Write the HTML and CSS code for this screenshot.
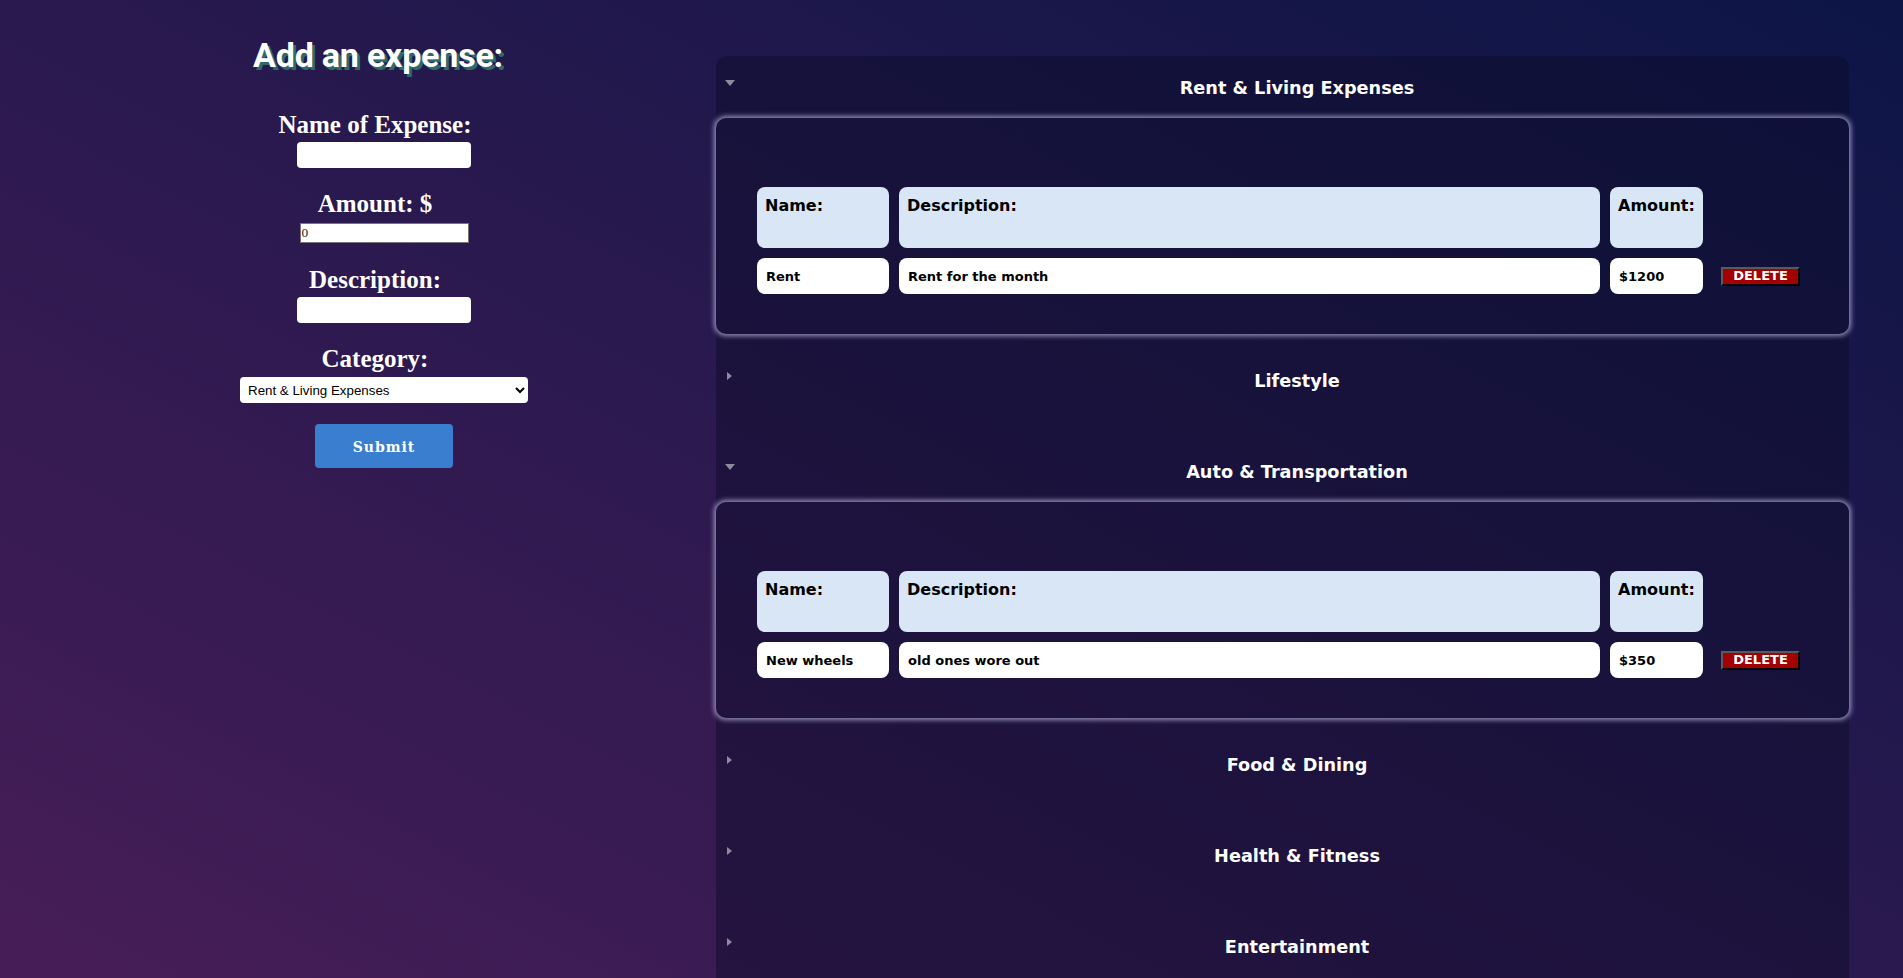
FILE: index.html
```html
<!DOCTYPE html>
<html lang="en">
<head>
<meta charset="utf-8">
<title>Expense Tracker</title>
<link rel="stylesheet" href="styles.css">
</head>
<body>
<div class="page">
  <aside class="form-col">
    <h1 class="title">Add an expense:</h1>
    <form class="expense-form">
      <div class="field">
        <label class="field-label" for="exp-name">Name of Expense:</label>
        <input class="text-input" id="exp-name" type="text">
      </div>
      <div class="field">
        <label class="field-label" for="exp-amount">Amount: $</label>
        <input class="num-input" id="exp-amount" type="text" value="0">
      </div>
      <div class="field">
        <label class="field-label" for="exp-desc">Description:</label>
        <input class="text-input" id="exp-desc" type="text">
      </div>
      <div class="field field-last">
        <label class="field-label" for="exp-cat">Category:</label>
        <select class="cat-select" id="exp-cat">
          <option>Rent &amp; Living Expenses</option>
          <option>Lifestyle</option>
          <option>Auto &amp; Transportation</option>
          <option>Food &amp; Dining</option>
          <option>Health &amp; Fitness</option>
          <option>Entertainment</option>
        </select>
      </div>
      <button class="submit-btn" type="button">Submit</button>
    </form>
  </aside>

  <main class="categories">
    <details class="category" open>
      <summary class="cat-head"><span class="marker-box"><span class="marker"></span></span><span class="cat-title">Rent &amp; Living Expenses</span></summary>
      <div class="cat-box">
        <div class="exp-grid">
          <div class="hcell">Name:</div>
          <div class="hcell">Description:</div>
          <div class="hcell">Amount:</div>
          <div class="acell"></div>
          <div class="dcell">Rent</div>
          <div class="dcell">Rent for the month</div>
          <div class="dcell">$1200</div>
          <div class="acell"><button class="del-btn" type="button">DELETE</button></div>
        </div>
      </div>
    </details>

    <details class="category">
      <summary class="cat-head"><span class="marker-box"><span class="marker"></span></span><span class="cat-title">Lifestyle</span></summary>
    </details>

    <details class="category" open>
      <summary class="cat-head"><span class="marker-box"><span class="marker"></span></span><span class="cat-title">Auto &amp; Transportation</span></summary>
      <div class="cat-box">
        <div class="exp-grid">
          <div class="hcell">Name:</div>
          <div class="hcell">Description:</div>
          <div class="hcell">Amount:</div>
          <div class="acell"></div>
          <div class="dcell">New wheels</div>
          <div class="dcell">old ones wore out</div>
          <div class="dcell">$350</div>
          <div class="acell"><button class="del-btn" type="button">DELETE</button></div>
        </div>
      </div>
    </details>

    <details class="category">
      <summary class="cat-head"><span class="marker-box"><span class="marker"></span></span><span class="cat-title">Food &amp; Dining</span></summary>
    </details>

    <details class="category">
      <summary class="cat-head"><span class="marker-box"><span class="marker"></span></span><span class="cat-title">Health &amp; Fitness</span></summary>
    </details>

    <details class="category">
      <summary class="cat-head"><span class="marker-box"><span class="marker"></span></span><span class="cat-title">Entertainment</span></summary>
    </details>
  </main>
</div>
</body>
</html>
```

FILE: styles.css
```css
html, body {
  margin: 0;
  padding: 0;
}

body {
  min-height: 100vh;
  background: linear-gradient(to top right, #471d57, #0c1546) fixed;
  overflow: hidden;
}

.page {
  display: flex;
  align-items: flex-start;
  width: 1903px;
  height: 978px;
  overflow: hidden;
}

/* ---------- left form column ---------- */
.form-col {
  width: 716px;
  flex: none;
  box-sizing: border-box;
  padding: 35px 0 0 52px;
  display: flex;
  flex-direction: column;
  align-items: center;
}

.title {
  margin: 0 0 36px 0;
  padding-right: 12px;
  font-family: Roboto, "Liberation Sans", sans-serif;
  font-weight: 700;
  font-size: 34px;
  line-height: 40px;
  letter-spacing: -0.2px;
  color: #ffffff;
  text-shadow: 3px 3px 0 #2d6b6b;
}

.expense-form {
  display: flex;
  flex-direction: column;
  align-items: center;
}

.field {
  display: flex;
  flex-direction: column;
  align-items: center;
  margin-bottom: 22px;
}

.field-last {
  margin-bottom: 20px;
}

.field-label {
  padding-right: 18px;
  margin-bottom: 3px;
  font-family: "Liberation Serif", serif;
  font-weight: 700;
  font-size: 25px;
  line-height: 28px;
  color: #ffffff;
}

.text-input {
  box-sizing: border-box;
  width: 174px;
  height: 26px;
  border: none;
  border-radius: 4px;
  background: #ffffff;
  padding: 0 6px;
  outline: none;
}

.num-input {
  box-sizing: border-box;
  width: 169px;
  height: 20px;
  margin-top: 2px;
  margin-bottom: 1px;
  border: 1px solid #767676;
  border-radius: 0;
  background: #ffffff;
  padding: 1px 1px;
  font-family: "Liberation Serif", serif;
  font-size: 13.33px;
  color: #222;
  outline: none;
}

.cat-select {
  box-sizing: border-box;
  width: 288px;
  height: 26px;
  margin-top: 1px;
  border: none;
  border-radius: 4px;
  background: #ffffff;
  padding: 0 4px;
  font-family: "Liberation Sans", Arial, sans-serif;
  font-size: 13.33px;
  color: #000;
}

.submit-btn {
  width: 138px;
  height: 44px;
  margin-top: 1px;
  border: none;
  border-radius: 4px;
  background: #3a7ecf;
  color: #ffffff;
  font-family: "DejaVu Serif", serif;
  font-weight: 700;
  font-size: 14px;
  letter-spacing: 1px;
  padding-top: 3px;
  cursor: pointer;
}

/* ---------- right categories panel ---------- */
.categories {
  width: 1133px;
  flex: none;
  margin-top: 56px;
  padding-top: 1px;
  min-height: 1100px;
  border-radius: 12px 12px 0 0;
  background: rgba(10, 10, 40, 0.45);
  font-family: "DejaVu Sans", Verdana, sans-serif;
}

.category {
  margin-bottom: 30px;
}

.category[open] {
  margin-bottom: 16px;
}

.cat-head {
  list-style: none;
  display: flex;
  align-items: center;
  height: 61px;
  padding-left: 8px;
  cursor: pointer;
}

.cat-head::-webkit-details-marker {
  display: none;
}

.marker-box {
  width: 11px;
  height: 10px;
  margin-bottom: 10px;
  display: flex;
  align-items: center;
  justify-content: center;
  flex: none;
}

.marker {
  width: 0;
  height: 0;
  border-left: 5px solid #8d8b9e;
  border-top: 4.5px solid transparent;
  border-bottom: 4.5px solid transparent;
}

.category[open] .marker {
  border-left: 5px solid transparent;
  border-right: 5px solid transparent;
  border-top: 6px solid #8d8b9e;
  border-bottom: 0;
}

.cat-title {
  flex: 1;
  padding-left: 10px;
  text-align: center;
  font-weight: 700;
  font-size: 17.7px;
  color: #ffffff;
}

.cat-box {
  box-sizing: border-box;
  height: 216px;
  padding: 69px 0 40px 41px;
  border-radius: 10px;
  box-shadow: 0 0 5px 2px rgba(185, 183, 225, 0.75);
}

.exp-grid {
  display: grid;
  grid-template-columns: 132px 701px 93px 1fr;
  grid-template-rows: 61px 36px;
  column-gap: 10px;
  row-gap: 10px;
}

.hcell {
  box-sizing: border-box;
  padding: 9px 8px;
  border-radius: 8px;
  background: #d9e6f6;
  color: #000;
  font-weight: 700;
  font-size: 16px;
}

.dcell {
  box-sizing: border-box;
  display: flex;
  align-items: center;
  padding: 0 9px;
  border-radius: 8px;
  background: #ffffff;
  color: #000;
  font-weight: 700;
  font-size: 13px;
}

.acell {
  display: flex;
  align-items: center;
}

.del-btn {
  box-sizing: border-box;
  width: 79px;
  height: 19px;
  margin-left: 8px;
  padding: 0;
  border: 2px outset #5a5a5a;
  background: #a30000;
  color: #ffffff;
  font-family: "DejaVu Sans", Verdana, sans-serif;
  font-weight: 700;
  font-size: 13px;
  line-height: 14px;
  cursor: pointer;
}
```
